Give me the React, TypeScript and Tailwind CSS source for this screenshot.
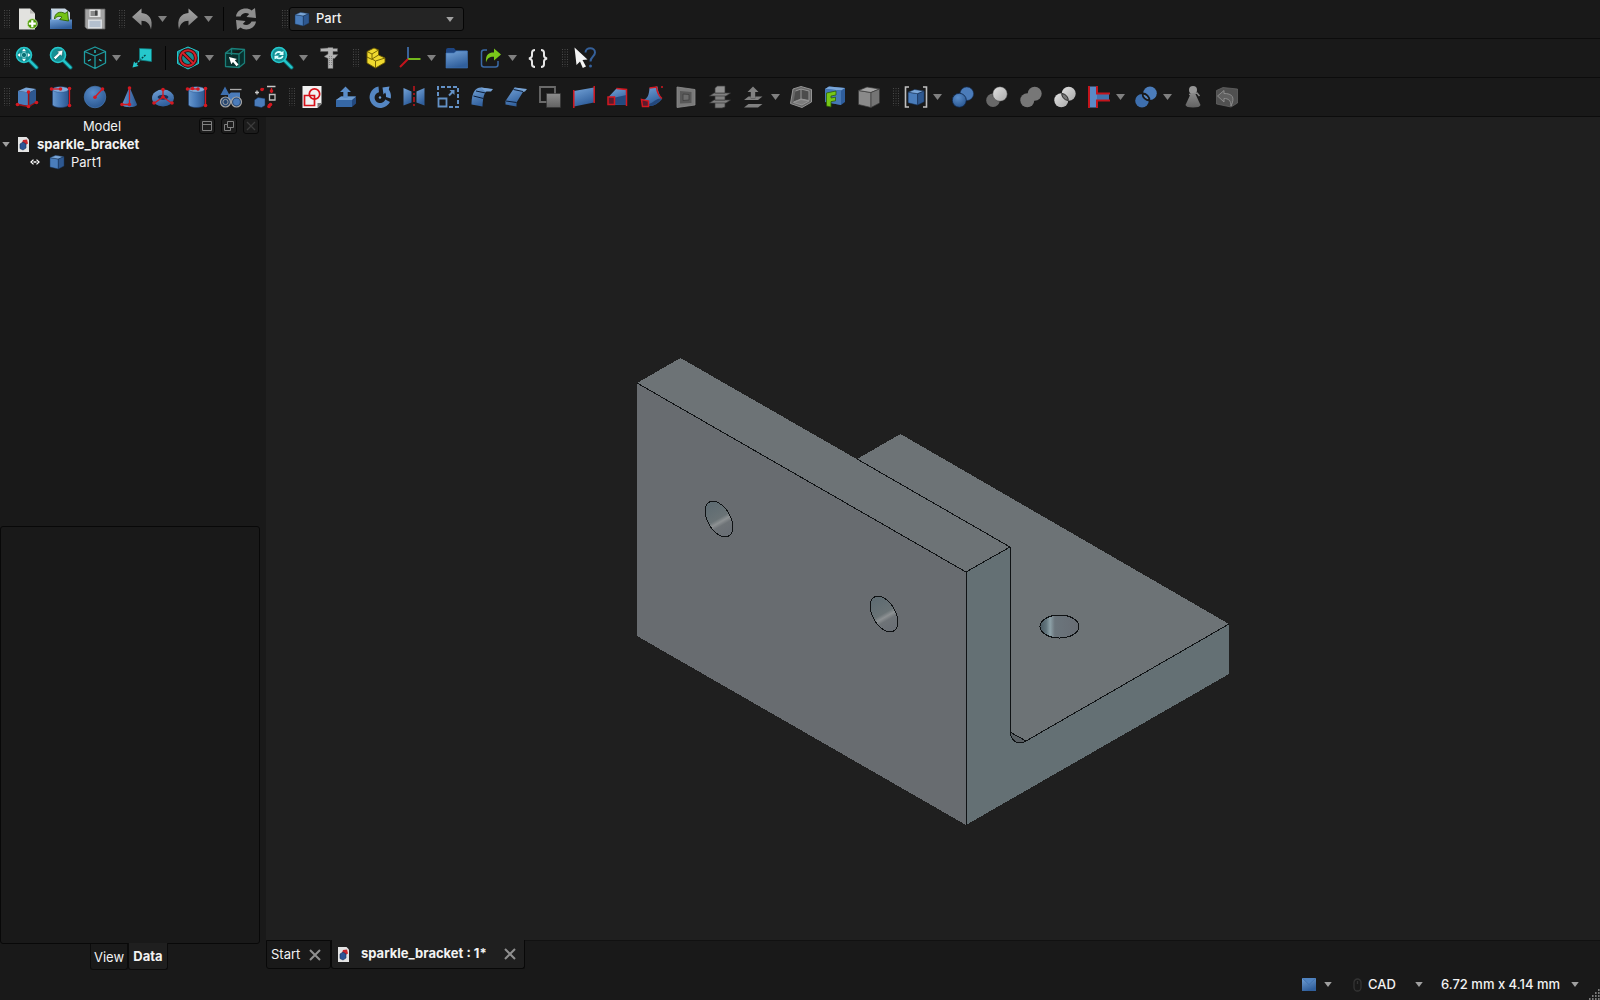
import React from "react";

type Tool = { name: string; art: React.ReactNode; menu?: boolean; tight?: boolean };

const B1 = "url(#blueV)";
const G1 = "url(#grayV)";
const NAVY = "#0b1d38";
const RED = "#d41820";
const TEAL = "#25c8cc";

function Defs() {
  return (
    <svg className="absolute h-0 w-0" aria-hidden="true">
      <defs>
        <linearGradient id="blueV" x1="0" y1="0" x2="0.4" y2="1">
          <stop offset="0" stopColor="#74a3d8" />
          <stop offset="1" stopColor="#305f9c" />
        </linearGradient>
        <linearGradient id="blueH" x1="0" y1="0" x2="1" y2="0">
          <stop offset="0" stopColor="#6897cc" />
          <stop offset="0.4" stopColor="#4b7ebc" />
          <stop offset="1" stopColor="#2b568f" />
        </linearGradient>
        <linearGradient id="grayV" x1="0" y1="0" x2="0" y2="1">
          <stop offset="0" stopColor="#8d8d8d" />
          <stop offset="1" stopColor="#626262" />
        </linearGradient>
        <linearGradient id="arrowV" x1="0" y1="0" x2="0" y2="1">
          <stop offset="0" stopColor="#a4a4a4" />
          <stop offset="1" stopColor="#7c7c7c" />
        </linearGradient>
        <linearGradient id="lightV" x1="0" y1="0" x2="1" y2="1">
          <stop offset="0" stopColor="#e2e2e2" />
          <stop offset="1" stopColor="#a9a9a9" />
        </linearGradient>
        <radialGradient id="ball" cx="0.4" cy="0.3" r="0.8">
          <stop offset="0" stopColor="#5a8ecb" />
          <stop offset="1" stopColor="#26528c" />
        </radialGradient>
        <linearGradient id="holeL" gradientUnits="userSpaceOnUse" x1="-8" y1="-14" x2="8" y2="14">
          <stop offset="0" stopColor="#5f6c72" />
          <stop offset="0.48" stopColor="#6a7376" />
          <stop offset="0.6" stopColor="#8d9193" />
          <stop offset="0.72" stopColor="#6e7377" />
          <stop offset="1" stopColor="#6a6f75" />
        </linearGradient>
        <linearGradient id="holeT" x1="0" y1="0" x2="1" y2="0">
          <stop offset="0" stopColor="#4b5a62" />
          <stop offset="0.16" stopColor="#62757d" />
          <stop offset="0.26" stopColor="#8da1a8" />
          <stop offset="0.38" stopColor="#6b757c" />
          <stop offset="1" stopColor="#686d74" />
        </linearGradient>
      </defs>
    </svg>
  );
}

function Cube({ gray = false }: { gray?: boolean }) {
  const [l, t, r, s] = gray ? ["#8a8a8a", "#a3a3a3", "#747474", "#3b3b3b"] : ["#4a7dbb", "#7aa6d8", "#2e5890", "#16335a"];
  return (
    <g stroke={s} strokeWidth="0.7" strokeLinejoin="round">
      <path d="M1.500 5.500 14 7.500V22.500L1.500 19.500Z" fill={l} />
      <path d="M1.500 5.500 10 2 22.500 4 14 7.500Z" fill={t} />
      <path d="M14 7.500 22.500 4V18L14 22.500Z" fill={r} />
    </g>
  );
}

const Dots = ({ p, c = RED, r = 1.8 }: { p: number[][]; c?: string; r?: number }) => (
  <g fill={c}>{p.map(([x, y], i) => <circle key={i} cx={x} cy={y} r={r} />)}</g>
);

const lens = (
  <>
    <path d="M14 14 21.500 21.500" stroke="#0b6b70" strokeWidth="4" strokeLinecap="round" />
    <path d="M14 14 21.500 21.500" stroke={TEAL} strokeWidth="2.400" strokeLinecap="round" />
    <circle cx="9" cy="9" r="7.500" fill="#148f94" stroke={TEAL} strokeWidth="1.600" />
  </>
);

const row1a: Tool[] = [
  {
    name: "New document",
    art: (
      <>
        <path d="M4 1.500H15L20 6.500V22.500H4Z" fill="#e2e2df" />
        <path d="M15 1.500V6.500H20Z" fill="#b9b9b6" />
        <circle cx="17.300" cy="16.700" r="5" fill="#4e9a06" stroke="#cfe8b5" strokeWidth="0.800" />
        <path d="M17.300 13.200V20.200M13.800 16.700H20.800" stroke="#fff" strokeWidth="2.200" />
      </>
    ),
  },
  {
    name: "Open document",
    art: (
      <>
        <path d="M2 1.500H16L21 5.500V15H2Z" fill="#c9d8e4" />
        <path d="M1.500 9V3H2.500V22H1.500Z" fill="#3465a4" />
        <path d="M1 12.500H23V22H1Z" fill={B1} />
        <path d="M5.500 12C5.500 6 11 3.500 16 6.500L18.500 4.500 19.500 14 10.500 12.500 13 10.200C10 8.500 7.500 9.500 5.500 12Z" fill="#73c216" stroke="#2f6405" strokeWidth="0.900" />
      </>
    ),
  },
  {
    name: "Save document",
    art: (
      <>
        <path d="M2 2H22V22H4L2 20Z" fill="#a3a3a3" stroke="#5c5c5c" strokeWidth="0.800" />
        <path d="M6.500 2.500H17.500V10H6.500Z" fill="#e4e4e4" />
        <path d="M7.500 4H14.500V9H7.500Z" fill="#8a8a8a" />
        <path d="M12 3.500H14.500V8.500H12Z" fill="#444" />
        <path d="M5 12.500H19V21.500H5Z" fill="#d9dde1" />
        <path d="M6.500 15H17.500M6.500 17H17.500M6.500 19H17.500" stroke="#7c95b2" strokeWidth="0.800" />
      </>
    ),
  },
];

const undoArt = (
  <path d="M2 10 11.500 1.500V6C19 6.500 23.500 12 21 22.500 19.500 16.500 17 14 11.500 13.800V18.500Z" fill="url(#arrowV)" />
);

const row1b: Tool[] = [
  { name: "Undo", art: undoArt, menu: true, tight: true },
  { name: "Redo", art: <g transform="matrix(-1 0 0 1 24 0)">{undoArt}</g>, menu: true, tight: true },
];

const row1c: Tool[] = [
  {
    name: "Refresh",
    art: (
      <g fill="#8e8e8e">
        <path d="M2 9.500C3 1.500 13 -.5 17.500 3.500L21 1 22 11 12.500 10 15.200 7C12 5 8 6 6.500 9.500Z" />
        <path d="M22 14.500C21 22.500 11 24.500 6.500 20.500L3 23 2 13 11.500 14 8.800 17C12 19 16 18 17.500 14.500Z" />
      </g>
    ),
  },
];

const row2a: Tool[] = [
  {
    name: "Fit all",
    art: (
      <>
        {lens}
        <path d="M9 2.500 11 5.200H7ZM9 15.500 11 12.800H7ZM2.500 9 5.200 7V11ZM15.500 9 12.800 7V11Z" fill="#fff" />
        <circle cx="9" cy="9" r="2.600" fill="#0a6f74" stroke="#bff" strokeWidth="0.600" />
      </>
    ),
  },
  {
    name: "Fit selection",
    art: (
      <>
        {lens}
        <path d="M14 4 8 5.500 9.500 7 4.500 11.500 6.500 13.500 11.300 8.800 12.800 10.300Z" fill="#fff" stroke="#0a5257" strokeWidth="0.500" />
      </>
    ),
  },
  {
    name: "Isometric view",
    menu: true,
    art: (
      <g fill="none" stroke="#1f9da1" strokeWidth="1.300" strokeLinejoin="round">
        <path d="M12 1 22.500 5.500V17L12 22.500 1.500 17V5.500ZM1.500 5.500 12 10 22.500 5.500M12 10V22.500" />
        <path d="M12 4V7M5 15 8 13.500M16 13.500 18.500 15" stroke={TEAL} />
      </g>
    ),
  },
  {
    name: "Align to selection",
    art: (
      <>
        <path d="M9.500 2.500 21.500 3V15.500L9.500 14Z" fill={TEAL} stroke="#0b7c80" strokeWidth="0.700" />
        <path d="M15.500 9 10.500 13.500" stroke="#063f42" strokeWidth="1.400" strokeDasharray="2 1" />
        <path d="M9.500 14.500 6 18" stroke={TEAL} strokeWidth="1.400" strokeDasharray="2 1" />
        <path d="M2.500 21.500 4 15.500 8.500 20Z" fill={TEAL} />
      </>
    ),
  },
];

const row2b: Tool[] = [
  {
    name: "Draw style",
    menu: true,
    art: (
      <>
        <path d="M12 1 22.500 5.500V17.500L12 23 1.500 17.500V5.500Z" fill="#178e93" stroke={TEAL} strokeWidth="1" />
        <circle cx="12" cy="12" r="7.800" fill="none" stroke="#2e0a0c" strokeWidth="3.800" />
        <path d="M6.500 6.500 17.500 17.500" stroke="#2e0a0c" strokeWidth="3.800" />
        <circle cx="12" cy="12" r="7.800" fill="none" stroke="#d2222a" strokeWidth="2" />
        <path d="M6.500 6.500 17.500 17.500" stroke="#d2222a" strokeWidth="2" />
      </>
    ),
  },
  {
    name: "Box selection",
    menu: true,
    art: (
      <>
        <path d="M2.500 7 8.500 2.500 21.500 3.500V17L16 21.500 2.500 20.500ZM2.500 7 16 8 21.500 3.500M16 8V21.500M8.500 2.500V9" fill="#082f2d" stroke="#1a7f79" strokeWidth="1.300" strokeLinejoin="round" />
        <path d="M6 11 14 13 11.800 14.300 15.500 18.500 13.500 20.200 10 16 8.300 18.200Z" fill="#fff" />
      </>
    ),
  },
  {
    name: "View rotation",
    menu: true,
    art: (
      <>
        {lens}
        <path d="M4.500 8.500C5 5 9.500 4 12 6L13.500 4.800V9H9L10.500 7.500C8.500 6.500 6.500 7 6 8.800ZM13.500 10C13 13.500 8.500 14 6.300 12.500L4.500 13.500V9.800H9L7.700 11.200C9.500 12 11.500 11.500 12 9.800Z" fill="#dff" />
      </>
    ),
  },
  {
    name: "Measure",
    art: (
      <g fill="#b4b4b4" stroke="#5d5d5d" strokeWidth="0.500">
        <path d="M3.500 2.500 11 2V1.500H16V2.500H20.500V5.500H16V8.500H21L17.500 12.500H16V22.500H11V12.500L7 10.500 11 8V5.500H3.500Z" />
        <path d="M12.500 10V20M14.500 10V20" stroke="#555" strokeDasharray="1 1" />
      </g>
    ),
  },
];

const row2c: Tool[] = [
  {
    name: "Create part",
    art: (
      <g stroke="#6b5a00" strokeWidth="0.900" strokeLinejoin="round">
        <path d="M3 5.500 10 2 14.500 4 14.500 9 21 12V16.500L11.500 22 3 17Z" fill="#efd92f" />
        <path d="M3 5.500 8 8 14.500 4M8 8V13L11.500 15 21 12M11.500 15V22M8 13 14.500 9M3 11 8 13.500" fill="none" />
      </g>
    ),
  },
  {
    name: "Coordinate system",
    menu: true,
    art: (
      <g strokeWidth="2" fill="none">
        <path d="M10 13V1" stroke="#3a6399" />
        <path d="M10 13H22.500" stroke="#73b81c" />
        <path d="M10 13 2 21" stroke="#c4141c" />
      </g>
    ),
  },
  {
    name: "Create group",
    art: (
      <>
        <path d="M1 4Q1 2 3 2H9L11 4.500H22V10H1Z" fill="#1d4583" />
        <path d="M1 7H9L11.500 5H22.500V22H1Z" fill={B1} stroke="#3d72b5" strokeWidth="0.600" />
      </>
    ),
  },
  {
    name: "Link actions",
    menu: true,
    art: (
      <>
        <path d="M8 4H5Q2.500 4 2.500 6.500V18.500Q2.500 21 5 21H16.500Q19 21 19 18.500V15" fill="none" stroke="#3a6aa6" strokeWidth="1.500" />
        <path d="M7 16.500C6.500 9 9 6.500 15 6.500V2.500L22 8.500 15 14.500V10.800C11 10.500 8.500 12 7 16.500Z" fill="#7ac81a" />
      </>
    ),
  },
  {
    name: "Variable set",
    art: (
      <g fill="none" stroke="#e6e6e6" strokeWidth="2">
        <path d="M9 4C6.500 4 6 5 6 6.800V9.500C6 11.300 5 12 3 12.500 5 13 6 13.700 6 15.500V18.200C6 20 6.500 21 9 21" />
        <path d="M15 4C17.500 4 18 5 18 6.800V9.500C18 11.300 19 12 21 12.500 19 13 18 13.700 18 15.500V18.200C18 20 17.500 21 15 21" />
      </g>
    ),
  },
];

const row2d: Tool[] = [
  {
    name: "What's this?",
    art: (
      <>
        <path d="M12.500 6.500C12.500 .8 22 .8 22 6.500 22 10.500 17.500 10.500 17.500 15.500" fill="none" stroke="#35609a" strokeWidth="2" />
        <circle cx="17.500" cy="20" r="1.500" fill="#35609a" />
        <path d="M1.500 1.500 14.500 13.500 9.500 14 13 20.500 9.800 22 7 15.500 3.500 19Z" fill="#f4f4f4" />
      </>
    ),
  },
];

const tube = (
  <>
    <path d="M3.500 4.500V19.500C3.500 23.500 19.500 23.500 19.500 19.500V4.500Z" fill="url(#blueH)" stroke="#1b3b6c" strokeWidth="0.600" />
    <ellipse cx="11.500" cy="4.500" rx="8" ry="2.800" fill="#84abd8" stroke="#2b568f" strokeWidth="0.500" />
    <path d="M20.500 3.500V21" stroke={RED} strokeWidth="1.300" />
  </>
);

const row3a: Tool[] = [
  {
    name: "Cube",
    art: (
      <>
        <path d="M3 6 14.500 7.500V21.500L3 19Z" fill="#4a7dbb" />
        <path d="M3 6 11 2.500 21 4 14.500 7.500Z" fill="#7aa6d8" />
        <path d="M14.500 7.500 21 4V17L14.500 21.500Z" fill="#2e5890" />
        <path d="M2.500 19.500 13.500 21.500 21 17.500M13.500 21.500V7" fill="none" stroke="#9d1218" strokeWidth="1.300" />
        <Dots p={[[2.500, 19.500], [13.500, 21.500], [21.500, 17.500], [13.500, 7]]} />
      </>
    ),
  },
  {
    name: "Cylinder",
    art: (
      <>
        {tube}
        <path d="M2.500 4H12" stroke={RED} strokeWidth="1.300" />
        <Dots p={[[2.500, 4], [11.500, 4], [20.500, 3.500], [20.500, 20.500]]} />
      </>
    ),
  },
  {
    name: "Sphere",
    art: (
      <>
        <circle cx="12" cy="12" r="10.800" fill="url(#ball)" stroke="#4a7dbb" strokeWidth="0.600" />
        <path d="M12 12 19 4.500" stroke={RED} strokeWidth="1.300" />
        <Dots p={[[12, 12.300], [19.500, 4]]} />
      </>
    ),
  },
  {
    name: "Cone",
    art: (
      <>
        <path d="M12.500 2 20 19.500C20 23 5 23 5 19.500Z" fill="url(#blueH)" />
        <path d="M12.500 3V19.500H5" fill="none" stroke={RED} strokeWidth="1.300" />
        <Dots p={[[12.500, 3], [12.500, 19.500], [5, 19.500]]} />
      </>
    ),
  },
  {
    name: "Torus",
    art: (
      <>
        <ellipse cx="12" cy="13" rx="11" ry="8.500" fill={B1} />
        <path d="M6.500 12C8 9 16 9 17.500 12 16 15.500 8 15.500 6.500 12Z" fill="#15315a" />
        <path d="M12 4.500V12L20.500 18M12 12 3.500 18" fill="none" stroke={RED} strokeWidth="1.300" />
        <Dots p={[[12, 4.500], [12, 12], [21, 18], [3, 18]]} />
      </>
    ),
  },
  {
    name: "Tube",
    art: (
      <>
        {tube}
        <path d="M2.500 4H14" stroke={RED} strokeWidth="1.300" />
        <Dots p={[[2.500, 4], [7.500, 3.500], [13, 4], [20.500, 3.500], [20.500, 20.500]]} />
      </>
    ),
  },
  {
    name: "Create primitives",
    art: (
      <>
        <path d="M6 1.500 10.500 10H1.500Z" fill="#3e6fae" />
        <path d="M9 10 12 7.500H21V16H9Z" fill="#4b7cba" />
        <path d="M11 4.500H22.500" stroke="#a9a9a9" strokeWidth="1.300" />
        <g fill="#24446e" stroke="#a5a5a5" strokeWidth="1.200">
          <circle cx="6.500" cy="17" r="5" />
          <circle cx="17.500" cy="17" r="5" />
          <circle cx="6.500" cy="17" r="2.600" fill="none" strokeWidth="0.900" />
          <circle cx="17.500" cy="17" r="3.400" fill="#4b7cba" stroke="none" />
        </g>
      </>
    ),
  },
  {
    name: "Shape builder",
    art: (
      <>
        <path d="M1.500 15 5 12.500 12 13.500V20.500L8.500 22.500 1.500 21Z" fill="#4b7cba" stroke="#17345f" strokeWidth="0.500" />
        <path d="M4 5.500V9.500M2 7.500H6M14 1.500H22.500" stroke="#c8c8c8" strokeWidth="1.300" />
        <path d="M18.500 3V8M9 4.500 11 3.500M15 19.500 17 20.500" stroke={RED} strokeWidth="1.300" />
        <path d="M16.500 9.500H22V15H16.500Z" fill="none" stroke="#bdbdbd" strokeWidth="1.300" />
        <Dots p={[[9, 4.500], [18.500, 6], [17.500, 19.500], [16, 21.500]]} />
      </>
    ),
  },
];

const row3b: Tool[] = [
  {
    name: "Sketch",
    art: (
      <>
        <path d="M2.500 1H21.500V19L17.500 23H2.500Z" fill="#f1f1f1" />
        <path d="M21.500 18H17.500V23L21.500 19Z" fill="#777" />
        <path d="M4.500 10.500H14.500V20.500H4.500Z" fill="none" stroke="#d6121a" strokeWidth="1.700" />
        <circle cx="14.500" cy="9" r="5.200" fill="none" stroke="#d6121a" strokeWidth="1.700" />
      </>
    ),
  },
  {
    name: "Extrude",
    art: (
      <>
        <path d="M2 15 7 11.500H22L18 15V22H2Z" fill="#3668a6" />
        <path d="M18 15 22 11.500V18.500L18 22Z" fill="#23497f" />
        <path d="M2 15 7 11.500H22L18 15Z" fill="#6d9bd0" />
        <path d="M11.500 1.500 17 7H13.700V13H9.300V7H6Z" fill="#5b8dc8" />
      </>
    ),
  },
  {
    name: "Revolve",
    art: (
      <>
        <path d="M10.500 1.500A10.800 10.800 0 1 0 22 17L17.300 14.500A5.500 5.500 0 1 1 11 7.200Z" fill="#5486c2" />
        <path d="M14.500 2.500 21.500 1.500 20.800 4.500Q23.500 8.500 22.800 13.500L18 12Q18.300 9 17.200 7.500L15.500 9.500Z" fill="#5f92cf" />
        <circle cx="12" cy="12.500" r="1.200" fill="#6f9fd4" />
      </>
    ),
  },
  {
    name: "Mirror",
    art: (
      <>
        <path d="M1.500 3 9.500 6.500V17.500L1.500 20.500Z" fill={B1} />
        <path d="M22.500 3 14.500 6.500V17.500L22.500 20.500Z" fill={B1} />
        <path d="M12 1V23" stroke="#c4141c" strokeWidth="1.500" strokeDasharray="5 2 2 2" />
      </>
    ),
  },
  {
    name: "Scale",
    art: (
      <g fill="none" stroke="#6391c6" strokeWidth="2">
        <path d="M2 11V2H22V22H12" strokeDasharray="4 2" />
        <path d="M2.500 13.500H10.500V21.500H2.500Z" strokeWidth="1.800" />
        <path d="M13 10.500 17 6.500" />
        <path d="M13.500 5H18.500V10Z" fill="#6391c6" stroke="none" />
      </g>
    ),
  },
  {
    name: "Fillet",
    art: (
      <>
        <path d="M1.500 18C2 8 5 2.500 11 2.500L20 4C14 6 13 12 12.500 21.500L1.500 19.500Z" fill={B1} />
        <path d="M11 2.500 23 4 21 6.500 15 6.500" fill="#78a4d6" />
        <path d="M3.500 11 13.500 13.500M6 6 15.500 8" stroke={NAVY} strokeWidth="1" />
      </>
    ),
  },
  {
    name: "Chamfer",
    art: (
      <>
        <path d="M1.500 16 10.500 2.500 20.500 4.500 12.500 17.500V21.500L1.500 19.500Z" fill={B1} />
        <path d="M10.500 2.500 23 4 21 6.500 18.500 7" fill="#78a4d6" />
        <path d="M2 16 12.500 17.500M9.500 4.500 19 6.500" stroke={NAVY} strokeWidth="1" />
      </>
    ),
  },
  {
    name: "Make face from wires",
    art: (
      <>
        <path d="M2 2H17V17H2Z" fill="none" stroke="#6a6a6a" strokeWidth="1.800" />
        <path d="M8.500 8.500H22.500V22.500H8.500Z" fill={G1} stroke="#333" strokeWidth="0.600" />
      </>
    ),
  },
  {
    name: "Ruled surface",
    art: (
      <>
        <path d="M2 6 22 2.500V17.500L2 21.500Z" fill={B1} />
        <path d="M1.800 5V23M22.200 1V18" stroke={RED} strokeWidth="1.500" />
      </>
    ),
  },
  {
    name: "Loft",
    art: (
      <>
        <path d="M2.500 12 10.500 3.500 20.500 4.500V20L10 20 2.500 19Z" fill={B1} />
        <path d="M9 12.500 20.500 10V20L9 19.500Z" fill="#234a80" />
        <path d="M10.500 3.500 20.500 4.500V21" fill="none" stroke={RED} strokeWidth="1.500" />
        <path d="M2 12H8.500V19.500H2Z" fill="#5c1a2c" stroke={RED} strokeWidth="1.500" />
      </>
    ),
  },
  {
    name: "Sweep",
    art: (
      <>
        <path d="M3 15C8 14 9 9 9.500 3L17.500 1.500C18 8 21 12 22 14 17 20 11 22.500 6 20Z" fill={B1} />
        <path d="M9 19C14 17 17 13 21.500 13.500 17 19.500 12 22 9 20.500Z" fill="#23477c" />
        <path d="M9.500 3 16.500 2C17 7 19 11 22 13.500M22 1V3" fill="none" stroke={RED} strokeWidth="1.500" />
        <path d="M1.500 14.500 8.500 16V21.500H2.500Z" fill="#5c1a2c" stroke={RED} strokeWidth="1.500" />
      </>
    ),
  },
  {
    name: "Offset face",
    art: (
      <>
        <path d="M3 2 21 4.500V20L3 22.500Z" fill="#7a7a7a" stroke="#8e8e8e" strokeWidth="0.800" />
        <path d="M6 6 17.500 7V18L6 18.500Z" fill="#585858" />
        <path d="M9 9 15 9.500V15L9 15.500Z" fill="#6c6c6c" stroke="#3f3f3f" strokeWidth="0.800" />
      </>
    ),
  },
  {
    name: "Section",
    art: (
      <g stroke="#3a3a3a" strokeWidth="0.700" fill="#808080">
        <path d="M7 16.500H17V22L14 23H7Z" />
        <path d="M1.500 18 6 15H22.500L18 18Z" />
        <path d="M7 9.500H17V15H7Z" />
        <path d="M1.500 11 6 8H22.500L18 11Z" />
        <path d="M7 3 9.500 1H17V8H7Z" fill="#909090" />
      </g>
    ),
  },
  {
    name: "Offset",
    menu: true,
    art: (
      <g fill="#808080">
        <path d="M11 1.500 16.500 7H13.200V13.500H8.800V7H5.500Z" />
        <path d="M2 15 6.500 11.500H8.800V13.500H13.200V11.500H20.500L16 15Z" />
        <path d="M2 22.500 6.500 19H20.500L16 22.500Z" />
      </g>
    ),
  },
  {
    name: "Thickness",
    art: (
      <g fill="#666" stroke="#949494" strokeWidth="1" strokeLinejoin="round">
        <path d="M4 4 12 1.500 22.500 4.500V17L13 22.500 1.500 18.500Z" />
        <path d="M6.500 6 12 4V14L4.500 17M12 4 20 6V15.500L12 14" fill="#4c4c4c" />
        <path d="M4.500 17.500 12 14.500 20 16 13 20Z" fill="#7c7c7c" />
      </g>
    ),
  },
  {
    name: "Projection on surface",
    art: (
      <>
        <path d="M2 4 6 1.500 22 3V17L18 20 2 17Z" fill="#2f5e9c" />
        <path d="M2 4 18 5.500 22 3 6 1.500Z" fill="#7aa6d8" />
        <path d="M2 4 18 5.500V20L2 17Z" fill="#4678b6" />
        <path d="M3.500 8 13 6V10L8 11V13L12.500 12.200V15.800L8 16.600V22L3.500 21Z" fill="#76c716" stroke="#2c5c06" strokeWidth="0.800" />
      </>
    ),
  },
  { name: "Color per face", art: <Cube gray /> },
];

const row3c: Tool[] = [
  {
    name: "Compound",
    menu: true,
    art: (
      <>
        <g transform="translate(3 3) scale(0.760)"><Cube /></g>
        <path d="M5 2H1.500V22H5M19 2H22.500V22H19" fill="none" stroke="#c0c0c0" strokeWidth="1.600" />
      </>
    ),
  },
  {
    name: "Boolean",
    art: (
      <>
        <circle cx="15.800" cy="8.700" r="6.800" fill="#4b7cba" stroke="#14305a" strokeWidth="0.600" />
        <circle cx="8.300" cy="15.300" r="7" fill="url(#ball)" stroke="#0d2548" strokeWidth="0.800" />
      </>
    ),
  },
  {
    name: "Cut",
    art: (
      <>
        <circle cx="8" cy="15.300" r="6.800" fill="#686868" />
        <circle cx="15" cy="9" r="7.300" fill="url(#lightV)" stroke="#333" strokeWidth="0.500" />
      </>
    ),
  },
  {
    name: "Union",
    art: (
      <g fill="#777">
        <circle cx="8.300" cy="15.300" r="7" />
        <circle cx="15.700" cy="8.700" r="7" />
      </g>
    ),
  },
  {
    name: "Intersection",
    art: (
      <>
        <circle cx="8.300" cy="15.300" r="7" fill="url(#lightV)" />
        <circle cx="15.700" cy="8.700" r="7" fill="url(#lightV)" />
        <path d="M8.700 8.500A7 7 0 0 1 15.300 15.500 7 7 0 0 1 8.700 8.500Z" fill="#777" stroke="#2a2a2a" strokeWidth="1" />
      </>
    ),
  },
  {
    name: "Join objects",
    menu: true,
    art: (
      <>
        <path d="M2.500 1.500H10V22.500H2.500Z" fill="#5a8ac6" />
        <path d="M10 8.500H22V15.500H10Z" fill="#4072ae" />
        <path d="M2 1V23M10 1V8.500H23M10 23V15.500H23" fill="none" stroke="#c4141c" strokeWidth="2" />
      </>
    ),
  },
  {
    name: "Split objects",
    menu: true,
    art: (
      <>
        <circle cx="16" cy="8.300" r="6.800" fill="#4b7cba" />
        <circle cx="8" cy="15.700" r="6.800" fill="#3e6fae" />
        <path d="M8.500 8.500A7 7 0 0 1 15.500 15.500 7 7 0 0 1 8.500 8.500Z" fill="#5a8ac6" stroke="#191919" strokeWidth="1.800" />
      </>
    ),
  },
  {
    name: "Check geometry",
    art: (
      <>
        <path d="M10.500 7H13.500L19.500 20Q19 22.500 12 22.500T4.500 20Z" fill={G1} />
        <circle cx="12" cy="5" r="4" fill="#969696" />
        <path d="M8 9.500 16 8 18.500 11" fill="none" stroke="#888" strokeWidth="1.600" />
      </>
    ),
  },
  {
    name: "Defeaturing",
    art: (
      <>
        <path d="M1.500 5.500 8 2.500 22.500 4V18L16 22 1.500 19Z" fill="#505050" stroke="#696969" strokeWidth="0.700" />
        <path d="M2.500 11 9 5.500V8.500C17 8.500 20.500 12 16 21 16 15.500 13.500 13.500 9 13.500V17Z" fill="#606060" stroke="#8c8c8c" strokeWidth="1" />
      </>
    ),
  },
];

function Caret({ small = false }: { small?: boolean }) {
  return (
    <svg viewBox="0 0 9 6" className={small ? "h-[5px] w-2" : "h-[6px] w-[9px]"} aria-hidden="true">
      <path d="M0 0H9L4.500 6Z" fill={small ? "#a0a0a0" : "#808080"} />
    </svg>
  );
}

function Handle({ first = false }: { first?: boolean }) {
  return (
    <span className={first ? "flex w-[10px] shrink-0 justify-end" : "flex w-[13px] shrink-0 justify-end"} aria-hidden="true">
      <svg width="6" height="20" viewBox="0 0 6 20">
        <path d="M.5 1V19M3 1V19M5.500 1V19" stroke="#4a4a4a" strokeWidth="1" strokeDasharray="1 1.500" />
      </svg>
    </span>
  );
}

const Divider = () => (
  <span className="flex h-6 w-3 shrink-0 justify-center" aria-hidden="true">
    <span className="w-px bg-[#050505]" />
  </span>
);

function Tools({ items }: { items: Tool[] }) {
  return (
    <>
      {items.map((t) => (
        <button
          key={t.name}
          type="button"
          aria-label={t.name}
          title={t.name}
          className={`flex h-8 shrink-0 items-center ${t.menu ? (t.tight ? "w-[46px]" : "w-[47px]") : "w-[34px]"}`}
        >
          <span className={t.tight ? "flex w-[33px] shrink-0 justify-center" : "flex w-[34px] shrink-0 justify-center"}>
            <svg viewBox="0 0 24 24" className="h-6 w-6" aria-hidden="true">{t.art}</svg>
          </span>
          {t.menu && <Caret />}
        </button>
      ))}
    </>
  );
}

const barClass = "flex h-[39px] items-center border-b border-[#0c0c0c]";

function DocIcon() {
  return (
    <svg viewBox="0 0 11 15" className="h-[15px] w-[11px] shrink-0" aria-hidden="true">
      <path d="M0 0H8.500L11 2.500V15H0Z" fill="#e4e4e4" />
      <path d="M5 3 9 2.500 10 6.500 6.500 8.500 4 6Z" fill="#c9252d" />
      <path d="M2 7 5 5 8 7V11L5 13 2 11.500Z" fill="#2d5596" stroke="#16305c" strokeWidth="0.600" />
    </svg>
  );
}

function CubeIcon() {
  return (
    <svg viewBox="0 0 24 24" className="h-4 w-4 shrink-0" aria-hidden="true"><Cube /></svg>
  );
}

function Cross() {
  return (
    <svg viewBox="0 0 12 12" className="h-3 w-3" aria-hidden="true">
      <path d="M1 1 11 11M11 1 1 11" stroke="#8f8f8f" strokeWidth="2" />
    </svg>
  );
}

function PanelButton({ label, children }: { label: string; children: React.ReactNode }) {
  return (
    <button type="button" aria-label={label} className="flex h-4 w-4 items-center justify-center rounded-[3px] border border-[#090909] bg-[#1c1c1c]">
      <svg viewBox="0 0 12 12" className="h-3 w-3 shrink-0" fill="none" aria-hidden="true">{children}</svg>
    </button>
  );
}

function ModelPanel() {
  return (
    <aside className="flex w-[266px] shrink-0 flex-col pr-[6px]">
      <header className="flex h-[18px] items-center pr-px">
        <h2 className="flex-1 pl-[5px] text-center text-[13px] leading-[18px]">Model</h2>
        <div className="flex gap-[6px]">
          <PanelButton label="Collapse panel"><path d="M1.500 1.500H10.500V10.500H1.500ZM1.500 4.500H10.500" stroke="#808080" /></PanelButton>
          <PanelButton label="Float panel"><path d="M4.500 1.500H10.500V7.500H4.500ZM4.500 4.500H1.500V10.500H7.500V7.500" stroke="#808080" /></PanelButton>
          <PanelButton label="Close panel"><path d="M2 2 10 10M10 2 2 10" stroke="#3c3c3c" strokeWidth="1.300" /></PanelButton>
        </div>
      </header>
      <ul className="h-[391px] shrink-0 text-[13px] leading-[18px]" aria-label="Model tree">
        <li>
          <button type="button" className="flex h-[18px] items-center pl-[2px] font-bold">
            <Caret small />
            <span className="w-2" />
            <DocIcon />
            <span className="pl-2">sparkle_bracket</span>
          </button>
          <ul>
            <li className="flex h-[18px] items-center pl-[30px]">
              <button type="button" aria-label="Toggle visibility">
                <svg viewBox="0 0 10 6" className="h-[6px] w-[10px]" aria-hidden="true">
                  <path d="M3.500 .6 1 3 3.500 5.400M6.500 .6 9 3 6.500 5.400" fill="none" stroke="#fff" strokeWidth="1.300" />
                  <path d="M3.500 3H6.500" stroke="#fff" strokeWidth="1.500" />
                </svg>
              </button>
              <button type="button" className="flex items-center pl-[9px]">
                <CubeIcon />
                <span className="pl-[6px]">Part1</span>
              </button>
            </li>
          </ul>
        </li>
      </ul>
      <section className="min-h-0 flex-1 rounded-[3px] border border-[#080808]" aria-label="Properties" />
      <div className="flex h-14 shrink-0 justify-center pr-[2px]" role="tablist" aria-label="Property tabs">
        <button type="button" role="tab" aria-selected="false" className="h-[26px] w-[38px] rounded-b-[3px] border border-t-0 border-[#0b0b0b] text-[13px] leading-6">View</button>
        <button type="button" role="tab" aria-selected="true" className="-mt-px h-[27px] w-10 rounded-b-[3px] border border-t-0 border-[#0b0b0b] bg-[#1f1f1f] text-[13px] font-bold leading-6">Data</button>
      </div>
    </aside>
  );
}

function Viewport() {
  return (
    <svg viewBox="266 117 1334 823" className="min-h-0 w-full flex-1 bg-[#1f1f1f]" role="img" aria-label="sparkle_bracket model">
      <g shapeRendering="crispEdges">
        <path d="M857 459 900.500 434 1229 624 1026 741 1010 732V547Z" fill="#6d7376" />
        <path d="M637 383 680.500 358 1010 547 966 572Z" fill="#6d7376" />
        <path d="M637 383 966 572V825L637 636Z" fill="#686c70" />
        <path d="M966 572 1010 547V733Q1012 742 1019 743 1023 743 1026 741L1229 624V674L966 825Z" fill="#647074" />
        <path d="M1010 732 1026 741Q1022 743 1019 743 1011 742 1010 732Z" fill="#595f63" />
      </g>
      <g fill="none" stroke="#0f1214" strokeWidth="1" shapeRendering="crispEdges">
        <path d="M637 383 966 572 1010 547M857 459 1010 547M966.500 572V825M1010.500 547V733" />
        <path d="M1010 732 1026 741L1229 624M1010 733Q1012 742 1019 743 1023 743 1026 741" />
      </g>
      {[[719, 519], [884, 614]].map(([x, y]) => (
        <g key={x} transform={`translate(${x} ${y})`}>
          <clipPath id={`hole${x}`}><ellipse rx="19.500" ry="11.300" transform="rotate(60)" /></clipPath>
          <rect x="-20" y="-20" width="40" height="40" fill="url(#holeL)" clipPath={`url(#hole${x})`} />
          <ellipse rx="19.500" ry="11.300" transform="rotate(60)" fill="none" stroke="#0f1214" shapeRendering="crispEdges" />
        </g>
      ))}
      <ellipse cx="1059.500" cy="626.500" rx="19.500" ry="11.500" fill="url(#holeT)" stroke="#0f1214" shapeRendering="crispEdges" />
    </svg>
  );
}

export default function App() {
  return (
    <div className="flex h-screen flex-col overflow-hidden bg-[#191919] font-['Inter','Liberation_Sans',sans-serif] text-[13px] text-[#f2f2f2]">
      <Defs />
      <div role="toolbar" aria-label="File" className={barClass}>
        <Handle first />
        <Tools items={row1a} />
        <Handle />
        <Tools items={row1b} />
        <Divider />
        <Tools items={row1c} />
        <span className="w-3 shrink-0" />
        <Handle />
        <div className="relative ml-px flex h-6 w-[175px] items-center rounded-[3px] border border-[#050505] bg-[#242424]">
          <span className="pointer-events-none absolute left-1"><CubeIcon /></span>
          <select aria-label="Workbench" className="h-full w-full appearance-none bg-transparent pl-[26px] text-[13px] font-medium outline-none">
            <option>Part</option>
          </select>
          <span className="pointer-events-none absolute right-[9px]"><Caret small /></span>
        </div>
      </div>
      <div role="toolbar" aria-label="View" className={barClass}>
        <Handle first />
        <Tools items={row2a} />
        <Divider />
        <Tools items={row2b} />
        <Handle />
        <Tools items={row2c} />
        <Handle />
        <Tools items={row2d} />
      </div>
      <div role="toolbar" aria-label="Part" className={barClass}>
        <Handle first />
        <Tools items={row3a} />
        <Handle />
        <Tools items={row3b} />
        <Handle />
        <Tools items={row3c} />
      </div>
      <div className="flex min-h-0 flex-1">
        <ModelPanel />
        <div className="flex min-w-0 flex-1 flex-col">
          <Viewport />
          <div className="flex h-[29px] shrink-0">
            <div className="flex w-[65px] items-center rounded-b-[3px] border border-[#080808] pl-1">
              <button type="button">Start</button>
              <button type="button" aria-label="Close Start" className="ml-auto mr-[9px]"><Cross /></button>
            </div>
            <div className="flex w-[194px] items-center rounded-b-[3px] border border-t-0 border-[#080808] bg-[#1f1f1f] pl-[6px]">
              <DocIcon />
              <button type="button" className="pl-3 font-bold">sparkle_bracket : 1*</button>
              <button type="button" aria-label="Close sparkle_bracket" className="ml-auto mr-2"><Cross /></button>
            </div>
            <div className="flex-1 border-t border-[#111]" />
          </div>
          <footer className="flex h-[31px] shrink-0 items-center justify-end">
            <button type="button" aria-label="Notifications" className="flex items-center gap-2">
              <svg viewBox="0 0 14 13" className="h-[13px] w-[14px]" aria-hidden="true">
                <path d="M0 0H14V13H0Z" fill={B1} />
                <path d="M0 0 7 6.500 14 0" fill="#5083c0" stroke="#3c6aa6" strokeWidth="0.700" />
              </svg>
              <Caret small />
            </button>
            <button type="button" className="ml-[21px] flex items-center font-medium">
              <svg viewBox="0 0 9 14" className="h-[14px] w-[9px]" aria-hidden="true">
                <path d="M4.500 1A3.500 3.500 0 0 1 8 4.500V9.500A3.500 3.500 0 0 1 1 9.500V4.500A3.500 3.500 0 0 1 4.500 1ZM4.500 3V6" fill="none" stroke="#343434" strokeWidth="1.300" />
              </svg>
              <span className="w-[53px] pl-[6px] text-left">CAD</span>
              <Caret small />
            </button>
            <button type="button" className="ml-[18px] flex items-center gap-[11px] font-medium">
              6.72 mm x 4.14 mm
              <Caret small />
            </button>
            <svg viewBox="0 0 12 12" className="ml-[9px] h-3 w-3 self-end" aria-hidden="true">
              <path d="M1 11H12M4 8H12M7 5H12M10 2H12" stroke="#9a9a9a" strokeWidth="1.600" strokeDasharray="1.600 1.400" />
            </svg>
          </footer>
        </div>
      </div>
    </div>
  );
}
